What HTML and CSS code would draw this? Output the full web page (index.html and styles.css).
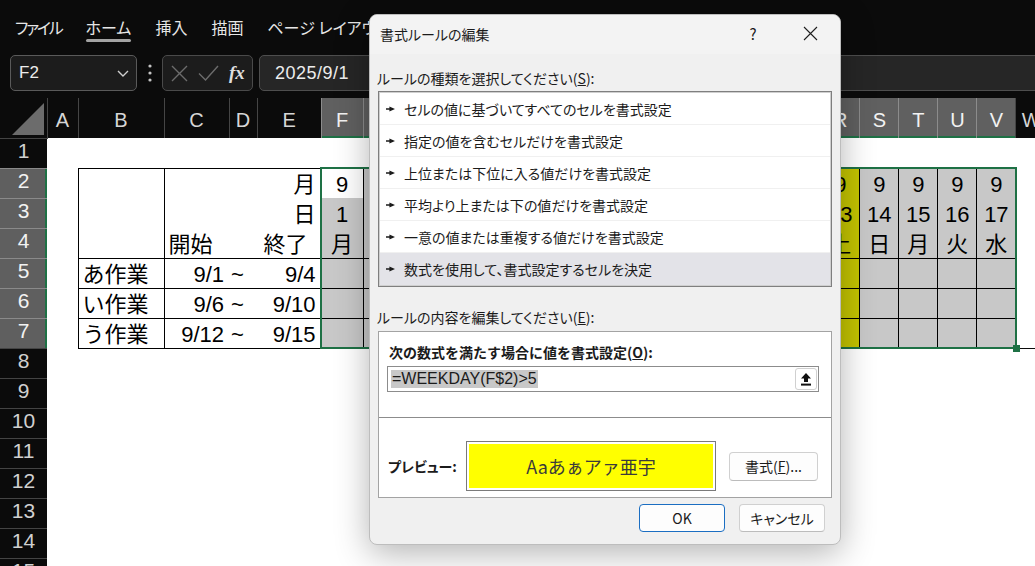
FILE: index.html
```html
<!DOCTYPE html>
<html lang="ja">
<head>
    <meta charset="UTF-8">
    <meta name="viewport" content="width=device-width, initial-scale=1.0">
    <title>書式ルールの編集 - Excel</title>
    <link rel="stylesheet" href="styles.css">
</head>
<body>
    <!-- リボンのタブ -->
    <nav class="tabs">
        <span class="tab tight">ファイル</span>
        <span class="tab active">ホーム</span>
        <span class="tab">挿入</span>
        <span class="tab">描画</span>
        <span class="tab">ページ レイアウト</span>
        <span class="tab">数式</span>
        <span class="tab">データ</span>
        <span class="tab">校閲</span>
        <span class="tab">表示</span>
    </nav>

    <!-- 数式バー -->
    <div class="formula-bar">
        <div class="name-box">
            <span>F2</span>
            <svg width="12" height="7" viewBox="0 0 12 7"><path d="M1 1l5 5 5-5" fill="none" stroke="#cfcfcf" stroke-width="1.4"/></svg>
        </div>
        <div class="bar-grip">
            <svg width="4" height="18" viewBox="0 0 4 18"><circle cx="2" cy="2" r="1.6" fill="#c4c4c4"/><circle cx="2" cy="9" r="1.6" fill="#c4c4c4"/><circle cx="2" cy="16" r="1.6" fill="#c4c4c4"/></svg>
        </div>
        <div class="fx-tools">
            <svg width="17" height="17" viewBox="0 0 17 17"><path d="M1 1l15 15M16 1L1 16" stroke="#6c6c6c" stroke-width="1.4"/></svg>
            <svg width="21" height="16" viewBox="0 0 21 16"><path d="M1 8.5l6.5 6.5L20 1" fill="none" stroke="#6c6c6c" stroke-width="1.4"/></svg>
            <span class="fx">fx</span>
        </div>
        <div class="formula-input">2025/9/1</div>
    </div>

    <!-- シート -->
    <div class="sheet-wrap">
        <table class="sheet">
            <colgroup id="sheet-cols"></colgroup>
            <thead id="sheet-head"></thead>
            <tbody id="sheet-body"></tbody>
        </table>
        <div class="selection"><span class="fill-handle"></span></div>
    </div>

    <!-- 書式ルールの編集ダイアログ -->
    <div class="dialog">
        <div class="dialog-title">
            <span class="title-text">書式ルールの編集</span>
            <span class="title-btn help">?</span>
            <span class="title-btn close">
                <svg width="15" height="15" viewBox="0 0 15 15"><path d="M1 1l13 13M14 1L1 14" stroke="#1f1f1f" stroke-width="1.1"/></svg>
            </span>
        </div>
        <div class="dialog-body">
            <label class="field-label">ルールの種類を選択してください(<u>S</u>):</label>
            <ul class="rule-list">
                <li><svg class="bullet" width="9" height="6" viewBox="0 0 9 6"><path d="M0 2.3h3.4V0.4L9 3 3.4 5.6V3.7H0z" fill="#1b1b1b"/></svg>セルの値に基づいてすべてのセルを書式設定</li>
                <li><svg class="bullet" width="9" height="6" viewBox="0 0 9 6"><path d="M0 2.3h3.4V0.4L9 3 3.4 5.6V3.7H0z" fill="#1b1b1b"/></svg>指定の値を含むセルだけを書式設定</li>
                <li><svg class="bullet" width="9" height="6" viewBox="0 0 9 6"><path d="M0 2.3h3.4V0.4L9 3 3.4 5.6V3.7H0z" fill="#1b1b1b"/></svg>上位または下位に入る値だけを書式設定</li>
                <li><svg class="bullet" width="9" height="6" viewBox="0 0 9 6"><path d="M0 2.3h3.4V0.4L9 3 3.4 5.6V3.7H0z" fill="#1b1b1b"/></svg>平均より上または下の値だけを書式設定</li>
                <li><svg class="bullet" width="9" height="6" viewBox="0 0 9 6"><path d="M0 2.3h3.4V0.4L9 3 3.4 5.6V3.7H0z" fill="#1b1b1b"/></svg>一意の値または重複する値だけを書式設定</li>
                <li class="selected"><svg class="bullet" width="9" height="6" viewBox="0 0 9 6"><path d="M0 2.3h3.4V0.4L9 3 3.4 5.6V3.7H0z" fill="#1b1b1b"/></svg>数式を使用して、書式設定するセルを決定</li>
            </ul>

            <label class="field-label second">ルールの内容を編集してください(<u>E</u>):</label>
            <div class="rule-box">
                <div class="rule-heading">次の数式を満たす場合に値を書式設定(<u>O</u>):</div>
                <div class="formula-field">
                    <span class="formula-text">=WEEKDAY(F$2)&gt;5</span>
                    <span class="collapse-btn">
                        <svg width="10" height="13" viewBox="0 0 10 13"><path d="M5 0l5 5.5H7V9H3V5.5H0z" fill="#111"/><rect y="10.6" width="10" height="2" fill="#111"/></svg>
                    </span>
                </div>
                <div class="rule-sep"></div>
                <div class="preview-row">
                    <span class="preview-label">プレビュー:</span>
                    <div class="preview-box"><div class="preview-sample">Aaあぁアァ亜宇</div></div>
                    <button class="btn format-btn">書式(<u>F</u>)...</button>
                </div>
            </div>

            <div class="dialog-actions">
                <button class="btn default">OK</button>
                <button class="btn">キャンセル</button>
            </div>
        </div>
    </div>

    <script>
        // シートのデータ
        const COLS = ['A','B','C','D','E','F','G','H','I','J','K','L','M','N','O','P','Q','R','S','T','U','V','W'];
        const WEEK = ['日','月','火','水','木','金','土'];
        const tasks = [
            { name: 'あ作業', start: '9/1', end: '9/4' },
            { name: 'い作業', start: '9/6', end: '9/10' },
            { name: 'う作業', start: '9/12', end: '9/15' }
        ];
        const dates = [];
        for (let i = 0; i < 17; i++) dates.push(new Date(2025, 8, 1 + i));

        // 列幅
        let cols = '<col class="c-head"><col class="c-a"><col class="c-b"><col class="c-c"><col class="c-d"><col class="c-e">';
        dates.forEach((d, i) => {
            cols += `<col class="${i === 0 ? 'c-f' : i < 12 ? 'c-day' : 'c-day-s'}">`;
        });
        cols += '<col class="c-w">';
        document.getElementById('sheet-cols').innerHTML = cols;

        // 列見出し
        let head = '<tr><th class="corner"><svg width="32" height="32" viewBox="0 0 32 32"><path d="M32 0V32H0z" fill="#6c6c6c"/></svg></th>';
        COLS.forEach((c, i) => {
            head += `<th class="ch${i >= 5 && i <= 21 ? ' sel' : ''}">${c}</th>`;
        });
        document.getElementById('sheet-head').innerHTML = head + '</tr>';

        // 日付の列 (条件付き書式: =WEEKDAY(F$2)>5)
        function dateCells(row) {
            return dates.map((d, i) => {
                let cls = 'dc';
                if (row === 2) cls += ' top';
                if (row === 4) cls += ' bottom';
                if (row >= 5) cls += ' top bottom';
                if (d.getDay() + 1 > 5) cls += ' hl';
                if (row === 2 && i === 0) cls += ' active';
                const text = row === 2 ? d.getMonth() + 1 : row === 3 ? d.getDate() : row === 4 ? WEEK[d.getDay()] : '';
                return `<td class="${cls}">${text}</td>`;
            }).join('');
        }

        let body = '';
        for (let r = 1; r <= 15; r++) {
            body += `<tr><th class="rh${r >= 2 && r <= 7 ? ' sel' : ''}">${r}</th><td></td>`;
            if (r === 1 || r >= 8) {
                body += '<td colspan="22"></td></tr>';
                continue;
            }
            if (r === 2) body += '<td class="box" rowspan="3"></td><td class="top"></td><td class="top"></td><td class="top right num">月</td>';
            if (r === 3) body += '<td></td><td></td><td class="right num">日</td>';
            if (r === 4) body += '<td class="bottom label">開始</td><td class="bottom"></td><td class="bottom right num end-label">終了</td>';
            if (r >= 5) {
                const t = tasks[r - 5];
                body += `<td class="box name">${t.name}</td><td class="top bottom num">${t.start}</td><td class="top bottom tilde">~</td><td class="top bottom right num">${t.end}</td>`;
            }
            body += dateCells(r) + '<td></td></tr>';
        }
        document.getElementById('sheet-body').innerHTML = body;
    </script>
</body>
</html>
```

FILE: styles.css
```css
/* リセット */
* {
    margin: 0;
    padding: 0;
    box-sizing: border-box;
}

body {
    width: 1035px;
    height: 566px;
    overflow: hidden;
    background: #0b0b0b;
    font-family: "Noto Sans CJK JP", sans-serif;
}

/* リボンのタブ */
.tabs {
    display: flex;
    align-items: center;
    gap: 24px;
    height: 52px;
    padding: 2px 0 0 15px;
    font-size: 16px;
    color: #e6e6e6;
    white-space: nowrap;
    font-feature-settings: "palt";
}

.tab {
    position: relative;
    line-height: 22px;
}

.tab.tight {
    letter-spacing: -2.2px;
}

.tab.active::after {
    content: "";
    position: absolute;
    left: 0;
    right: 0;
    bottom: -4px;
    height: 3px;
    border-radius: 2px;
    background: #a3a3a3;
}

/* 数式バー */
.formula-bar {
    display: flex;
    align-items: center;
    height: 46px;
    padding: 3px 0 7px 10px;
}

.name-box {
    width: 127px;
    height: 36px;
    display: flex;
    align-items: center;
    justify-content: space-between;
    padding: 0 7px 0 8px;
    border: 1px solid #5a5a5a;
    border-radius: 5px;
    background: #1c1c1c;
    color: #ececec;
    font: 17px "Liberation Sans", sans-serif;
}

.bar-grip {
    width: 25px;
    display: flex;
    justify-content: center;
}

.fx-tools {
    width: 91px;
    height: 36px;
    display: flex;
    align-items: center;
    gap: 10px;
    padding-left: 8px;
    border: 1px solid #4a4a4a;
    border-radius: 5px;
    background: #1c1c1c;
}

.fx {
    font: italic bold 19px "Liberation Serif", serif;
    color: #dedede;
}

.formula-input {
    flex: 1;
    height: 36px;
    margin: 0 -10px 0 6px;
    padding-left: 15px;
    border: 1px solid #4e4e4e;
    border-radius: 5px;
    background: #262626;
    color: #ededed;
    font: 18px/34px "Liberation Sans", sans-serif;
    letter-spacing: 0.5px;
}

/* シート */
.sheet-wrap {
    position: relative;
}

.sheet {
    width: 1046px;
    table-layout: fixed;
    border-collapse: collapse;
    font: 22px "Liberation Sans", "Noto Sans CJK JP", sans-serif;
    color: #000;
}

.c-head { width: 47px; }
.c-a { width: 31px; }
.c-b { width: 86px; }
.c-c { width: 65px; }
.c-d { width: 28px; }
.c-e { width: 64px; }
.c-f { width: 42px; }
.c-day { width: 41.6px; }
.c-day-s { width: 39px; }
.c-w { width: 30px; }

.sheet thead tr {
    height: 40px;
}

.sheet tbody tr {
    height: 30px;
}

.sheet th {
    font-weight: normal;
    font-family: "Liberation Sans", sans-serif;
    background: #0b0b0b;
    white-space: nowrap;
}

.sheet th.corner {
    vertical-align: bottom;
    text-align: right;
    padding: 0 3px 3px 0;
    line-height: 0;
}

.sheet th.ch {
    vertical-align: top;
    padding-top: 10px;
    font-size: 20px;
    line-height: 24px;
    color: #d6d6d6;
    border-left: 1px solid #454545;
}

.sheet th.ch.sel {
    background: #606060;
    color: #f2f2f2;
    border-left-color: #8c8c8c;
    box-shadow: inset 0 -2px 0 #1e7145;
}

.sheet th.rh {
    vertical-align: top;
    font-size: 21px;
    line-height: 24px;
    color: #d0d0d0;
    border-top: 1px solid #444;
}

.sheet th.rh.sel {
    background: #5f5f5f;
    color: #f2f2f2;
    border-top-color: #8a8a8a;
    box-shadow: inset -2px 0 0 #1e7145;
}

.sheet td {
    background: #fff;
    padding: 0 5px;
    line-height: 26px;
    vertical-align: bottom;
    white-space: nowrap;
    overflow: hidden;
}

.sheet td.top { border-top: 1px solid #000; }
.sheet td.bottom { border-bottom: 1px solid #000; }
.sheet td.right { border-right: 1px solid #000; }
.sheet td.box { border: 1px solid #000; }

.sheet td.num { text-align: right; }
.sheet td.name { padding-left: 4px; }
.sheet td.label { padding-left: 4px; }
.sheet td.end-label { padding-right: 13px; }
.sheet td.tilde { padding: 0 0 0 2px; }

.sheet td.dc {
    padding: 0;
    text-align: center;
    background: #c8c8c8;
    border-left: 1px solid #000;
    border-right: 1px solid #000;
}

.sheet td.dc.hl { background: #c4c400; }
.sheet td.dc.active { background: #fff; }

/* 選択範囲 */
.selection {
    position: absolute;
    left: 320px;
    top: 69px;
    width: 697px;
    height: 182px;
    border: 2px solid #1e7145;
    pointer-events: none;
}

.fill-handle {
    position: absolute;
    right: -5px;
    bottom: -5px;
    width: 7px;
    height: 7px;
    background: #1e7145;
}

/* ダイアログ */
.dialog {
    position: absolute;
    left: 369px;
    top: 14px;
    width: 472px;
    height: 531px;
    overflow: hidden;
    background: #f0f0f0;
    border: 1px solid #bdbdbd;
    border-radius: 8px;
    box-shadow: 0 8px 34px rgba(0, 0, 0, 0.3);
    font-size: 14px;
    color: #1b1b1b;
    font-feature-settings: "palt";
}

.dialog-title {
    display: flex;
    align-items: center;
    height: 39px;
    padding: 0 0 2px 10px;
    background: #f3f3f3;
}

.title-text {
    flex: 1;
    line-height: 20px;
}

.title-btn {
    display: flex;
    align-items: center;
    justify-content: center;
}

.title-btn.help {
    width: 40px;
    margin-right: 8px;
    font-size: 15px;
}

.title-btn.close {
    width: 59px;
    padding-right: 1px;
}

.dialog-body {
    padding: 0 8px;
}

.field-label {
    display: block;
    margin: 14px 0 0 -1px;
    line-height: 20px;
}

.field-label.second {
    margin-top: 20px;
}

.rule-list {
    list-style: none;
    margin-top: 3px;
    padding: 1px;
    background: #fff;
    border: 1px solid #7f7f7f;
    box-shadow: inset 0 0 0 1px #cfcfcf;
}

.rule-list li {
    display: flex;
    align-items: center;
    gap: 9px;
    height: 32px;
    padding-left: 6px;
    border-bottom: 1px solid #f0f0f0;
}

.rule-list li.selected {
    background: #e3e3e8;
    border-bottom: none;
}

.rule-box {
    margin-top: 4px;
    padding-bottom: 6px;
    background: #fff;
    border: 1px solid #a3a3a3;
}

.rule-heading {
    padding: 10px 0 0 10px;
    line-height: 20px;
    font-weight: bold;
    font-feature-settings: normal;
}

.formula-field {
    display: flex;
    align-items: center;
    justify-content: space-between;
    height: 26px;
    margin: 4px 12px 0 8px;
    padding: 0 1px 0 3px;
    border: 1px solid #8c8c8c;
}

.formula-text {
    padding: 0 1px;
    background: #c8c8c8;
    font: 16px/18px "Liberation Sans", sans-serif;
    color: #1b1b1b;
}

.collapse-btn {
    width: 22px;
    height: 22px;
    display: flex;
    align-items: center;
    justify-content: center;
    background: #fff;
    border: 1px solid #d0d0d0;
    border-radius: 3px;
}

.rule-sep {
    height: 1px;
    margin-top: 25px;
    background: #8c8c8c;
}

.preview-row {
    display: flex;
    align-items: center;
    margin-top: 23px;
    padding-left: 9px;
}

.preview-label {
    width: 78px;
    font-weight: bold;
}

.preview-box {
    width: 250px;
    height: 50px;
    padding: 2px;
    background: #fff;
    border: 1px solid #7a7a7a;
}

.preview-sample {
    height: 100%;
    display: flex;
    align-items: center;
    justify-content: center;
    background: #ffff00;
    font-size: 18px;
    color: #3a3a3a;
    font-feature-settings: normal;
}

.btn {
    height: 28px;
    font: 14px "Noto Sans CJK JP", sans-serif;
    font-feature-settings: "palt";
    color: #1b1b1b;
    background: #fdfdfd;
    border: 1px solid #d0d0d0;
    border-bottom-color: #bcbcbc;
    border-radius: 4px;
}

.format-btn {
    width: 89px;
    height: 29px;
    margin-left: 13px;
}

.dialog-actions {
    display: flex;
    justify-content: flex-end;
    gap: 14px;
    margin-top: 6px;
    padding-right: 7px;
}

.dialog-actions .btn {
    width: 86px;
}

.btn.default {
    border-color: #1b6ec2;
}
```
